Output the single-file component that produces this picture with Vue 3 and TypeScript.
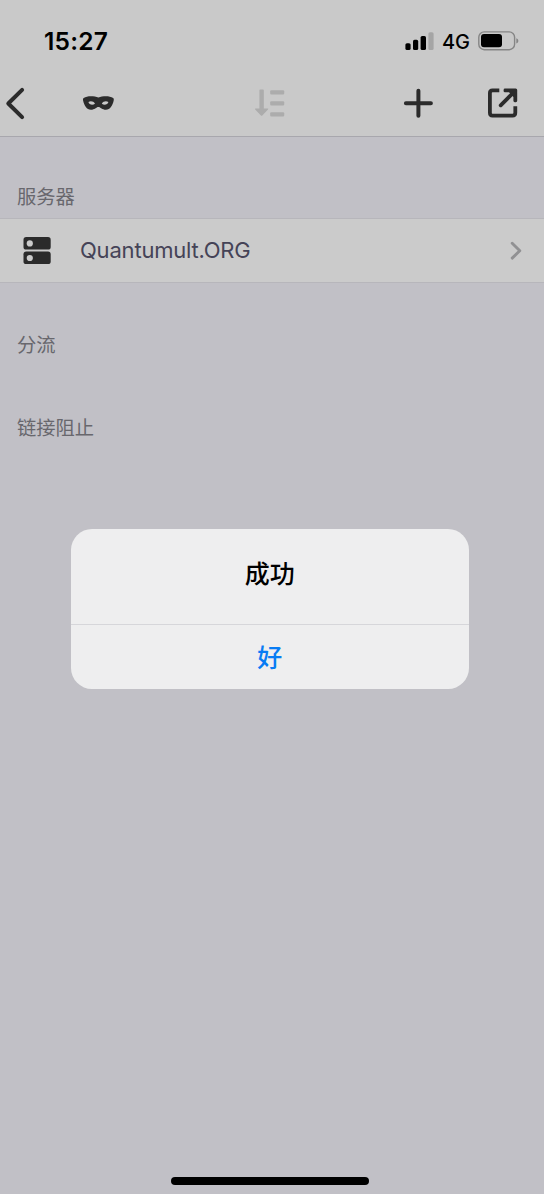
<script setup lang="ts">
import { ref } from 'vue'

interface Section {
  title: string
  servers: string[]
}

const sections: Section[] = [
  { title: '服务器', servers: ['Quantumult.ORG'] },
  { title: '分流', servers: [] },
  { title: '链接阻止', servers: [] },
]

const alertOpen = ref(true)
</script>

<template>
  <div class="screen">
    <header class="header">
      <div class="status">
        <span class="time">15:27</span>
        <div class="indicators">
          <svg class="signal" width="30" height="20" viewBox="0 0 30 20">
            <rect x=".4" y="12.2" width="5.2" height="6.9" rx="1.6" />
            <rect x="8" y="8.8" width="5.2" height="10.3" rx="1.6" />
            <rect x="15.6" y="4.9" width="5.4" height="14.2" rx="1.6" />
            <rect x="23.4" y="1.2" width="5.2" height="17.9" rx="1.6" fill="#a5a5a5" />
          </svg>
          <span class="network">4G</span>
          <svg class="battery" width="42" height="20" viewBox="0 0 42 20">
            <rect x=".8" y=".9" width="35.8" height="17.8" rx="5.4" fill="none" stroke="#858585" stroke-width="1.4" />
            <rect x="3" y="3.1" width="21" height="13.2" rx="3" />
            <path d="M38.3 7.2C41 8 41 11.6 38.3 12.4Z" fill="#858585" />
          </svg>
        </div>
      </div>
      <nav class="toolbar">
        <button aria-label="返回">
          <svg width="26" height="36" viewBox="0 0 26 36">
            <path d="M22.1 4.9 8.3 18.5l13.8 13.6" fill="none" stroke="#2b2b2b" stroke-width="4" stroke-linecap="round" stroke-linejoin="round" />
          </svg>
        </button>
        <button class="mask" aria-label="匿名">
          <svg width="34" height="20" viewBox="0 0 34 20">
            <path fill="#2b2b2b" fill-rule="evenodd" d="M17.4 4.4C21.4 3 28.4 2.4 32.1 4.9c.9.6.8 1.8.5 3-1.2 4.6-3.4 8.7-7.7 8.8-3.7 0-5.4-2.8-7.5-2.8s-3.8 2.8-7.5 2.8c-4.3-.1-6.5-4.2-7.7-8.8-.3-1.2-.4-2.4.5-3C6.4 2.4 13.4 3 17.4 4.4ZM7.4 9c.8 2.7 4.1 3.8 6.6 1.7C12.5 8.3 9.8 7.8 7.4 9ZM27.4 9c-2.4-1.2-5.1-.7-6.6 1.7 2.5 2.1 5.8 1 6.6-1.7Z" />
          </svg>
        </button>
        <button class="sort" aria-label="排序" disabled>
          <svg width="32" height="32" viewBox="0 0 32 32">
            <g fill="#acacac">
              <path d="M5.4 3.4q0-.8.8-.8h2.8q.8 0 .8.8v18.2h3.8q1.2 0 .4.9l-5.7 5.9q-.7.7-1.4 0L1.2 22.5q-.8-.9.4-.9h3.8Z" />
              <rect x="16.2" y="3.2" width="14" height="4.2" rx="1" />
              <rect x="16.2" y="14.2" width="14" height="4.2" rx="1" />
              <rect x="16.2" y="25.2" width="14" height="4.2" rx="1" />
            </g>
          </svg>
        </button>
        <button class="add" aria-label="添加">
          <svg width="32" height="32" viewBox="0 0 32 32">
            <path d="M16.4 3.7v25M3.9 16.2h25" stroke="#2b2b2b" stroke-width="4" stroke-linecap="round" />
          </svg>
        </button>
        <button class="open" aria-label="打开">
          <svg width="34" height="32" viewBox="0 0 34 32">
            <g fill="none" stroke="#2b2b2b" stroke-width="3.8">
              <path d="M13.3 3.4H6.5q-2.6 0-2.6 2.6v19.8q0 2.8 2.6 2.8h20q2.8 0 2.8-2.8v-6.6" />
              <path d="M14.7 18.3 28 5" stroke-linecap="round" />
            </g>
            <path d="M19 1.5h10.7q1.5 0 1.5 1.5v10.8q0 1.4-1.4 1.4h-1q-1.4 0-1.4-1.4V10L23 5.3h-4q-1.4 0-1.4-1.4v-1q0-1.4 1.4-1.4Z" fill="#2b2b2b" />
          </svg>
        </button>
      </nav>
    </header>

    <main class="list">
      <section v-for="section in sections" :key="section.title" class="section">
        <h2>{{ section.title }}</h2>
        <div v-for="server in section.servers" :key="server" class="row">
          <svg width="28" height="28" viewBox="0 0 28 28">
            <rect x=".5" y="0" width="27.2" height="12.6" rx="2.7" fill="#2b2b2b" />
            <rect x=".5" y="14.6" width="27.2" height="12.5" rx="2.7" fill="#2b2b2b" />
            <circle cx="6.8" cy="6.4" r="3.1" fill="#cbcbcb" />
            <circle cx="6.8" cy="21" r="3.1" fill="#cbcbcb" />
          </svg>
          <span class="server">{{ server }}</span>
          <svg class="chevron" width="14" height="22" viewBox="0 0 14 22">
            <path d="m3.2 3.2 7.6 7.5-7.6 7.4" fill="none" stroke="#919193" stroke-width="2.9" stroke-linecap="round" stroke-linejoin="round" />
          </svg>
        </div>
      </section>
    </main>

    <div v-if="alertOpen" class="alert" role="alertdialog">
      <p>成功</p>
      <button @click="alertOpen = false">好</button>
    </div>
    <div class="home-indicator"></div>
  </div>
</template>

<style>
body {
  margin: 0;
}
</style>

<style scoped>
.screen {
  position: relative;
  box-sizing: border-box;
  height: 1194px;
  overflow: hidden;
  background: #c1c0c6;
  font-family: Inter, "Noto Sans CJK SC", sans-serif;
}

button {
  padding: 0;
  border: 0;
  background: none;
  font: inherit;
}

svg {
  display: block;
  flex: none;
}

.header {
  box-sizing: border-box;
  height: 137px;
  border-bottom: 1px solid #a8a7ad;
  background: #c9c9c9;
}

.status {
  display: flex;
  justify-content: space-between;
  align-items: center;
  height: 82px;
  box-sizing: border-box;
  padding: 0 24px 0 44px;
}

.time {
  padding-bottom: 1px;
  font-size: 24.5px;
  font-weight: 600;
  line-height: 30px;
  letter-spacing: 0.2px;
}

.indicators {
  display: flex;
  align-items: center;
}

.network {
  margin: 0 8px 0 7px;
  padding-top: 1px;
  font-size: 20px;
  font-weight: 500;
  line-height: 24px;
}

.toolbar {
  display: flex;
  align-items: center;
  height: 42px;
}

.mask {
  margin-left: 55px;
}

.sort {
  margin-left: 139px;
}

.add {
  margin-left: 116px;
}

.open {
  margin-left: 52px;
}

.list {
  padding-top: 46px;
}

.section {
  margin-bottom: 47px;
}

h2 {
  margin: 0;
  padding: 0 17px;
  height: 36px;
  color: #68676d;
  font-size: 19.3px;
  font-weight: 400;
  line-height: 28px;
}

.row {
  display: flex;
  align-items: center;
  box-sizing: border-box;
  height: 65px;
  margin: -1px 0 48px;
  padding: 0 21px 0 23px;
  border: solid #b7b6bb;
  border-width: 1px 0;
  background: #cbcbcb;
}

.section:has(.row) {
  margin-bottom: 0;
}

.server {
  margin-left: 29px;
  padding-bottom: 2px;
  color: #454357;
  font-size: 22px;
  line-height: 28px;
  letter-spacing: -0.2px;
}

.chevron {
  margin-left: auto;
}

.alert {
  position: absolute;
  top: 529px;
  left: 71px;
  width: 397.5px;
  height: 160px;
  overflow: hidden;
  border-radius: 21px;
  background: #eeeeef;
  text-align: center;
}

.alert p {
  box-sizing: border-box;
  height: 96px;
  margin: 0;
  border-bottom: 1px solid #d6d6da;
  font-size: 25px;
  font-weight: 500;
  line-height: 90px;
}

.alert button {
  width: 100%;
  height: 64px;
  color: #087cf4;
  font-size: 25px;
  font-weight: 500;
  line-height: 66px;
}

.home-indicator {
  position: absolute;
  bottom: 9px;
  left: 171px;
  width: 198px;
  height: 8px;
  border-radius: 4px;
  background: #000;
}
</style>
